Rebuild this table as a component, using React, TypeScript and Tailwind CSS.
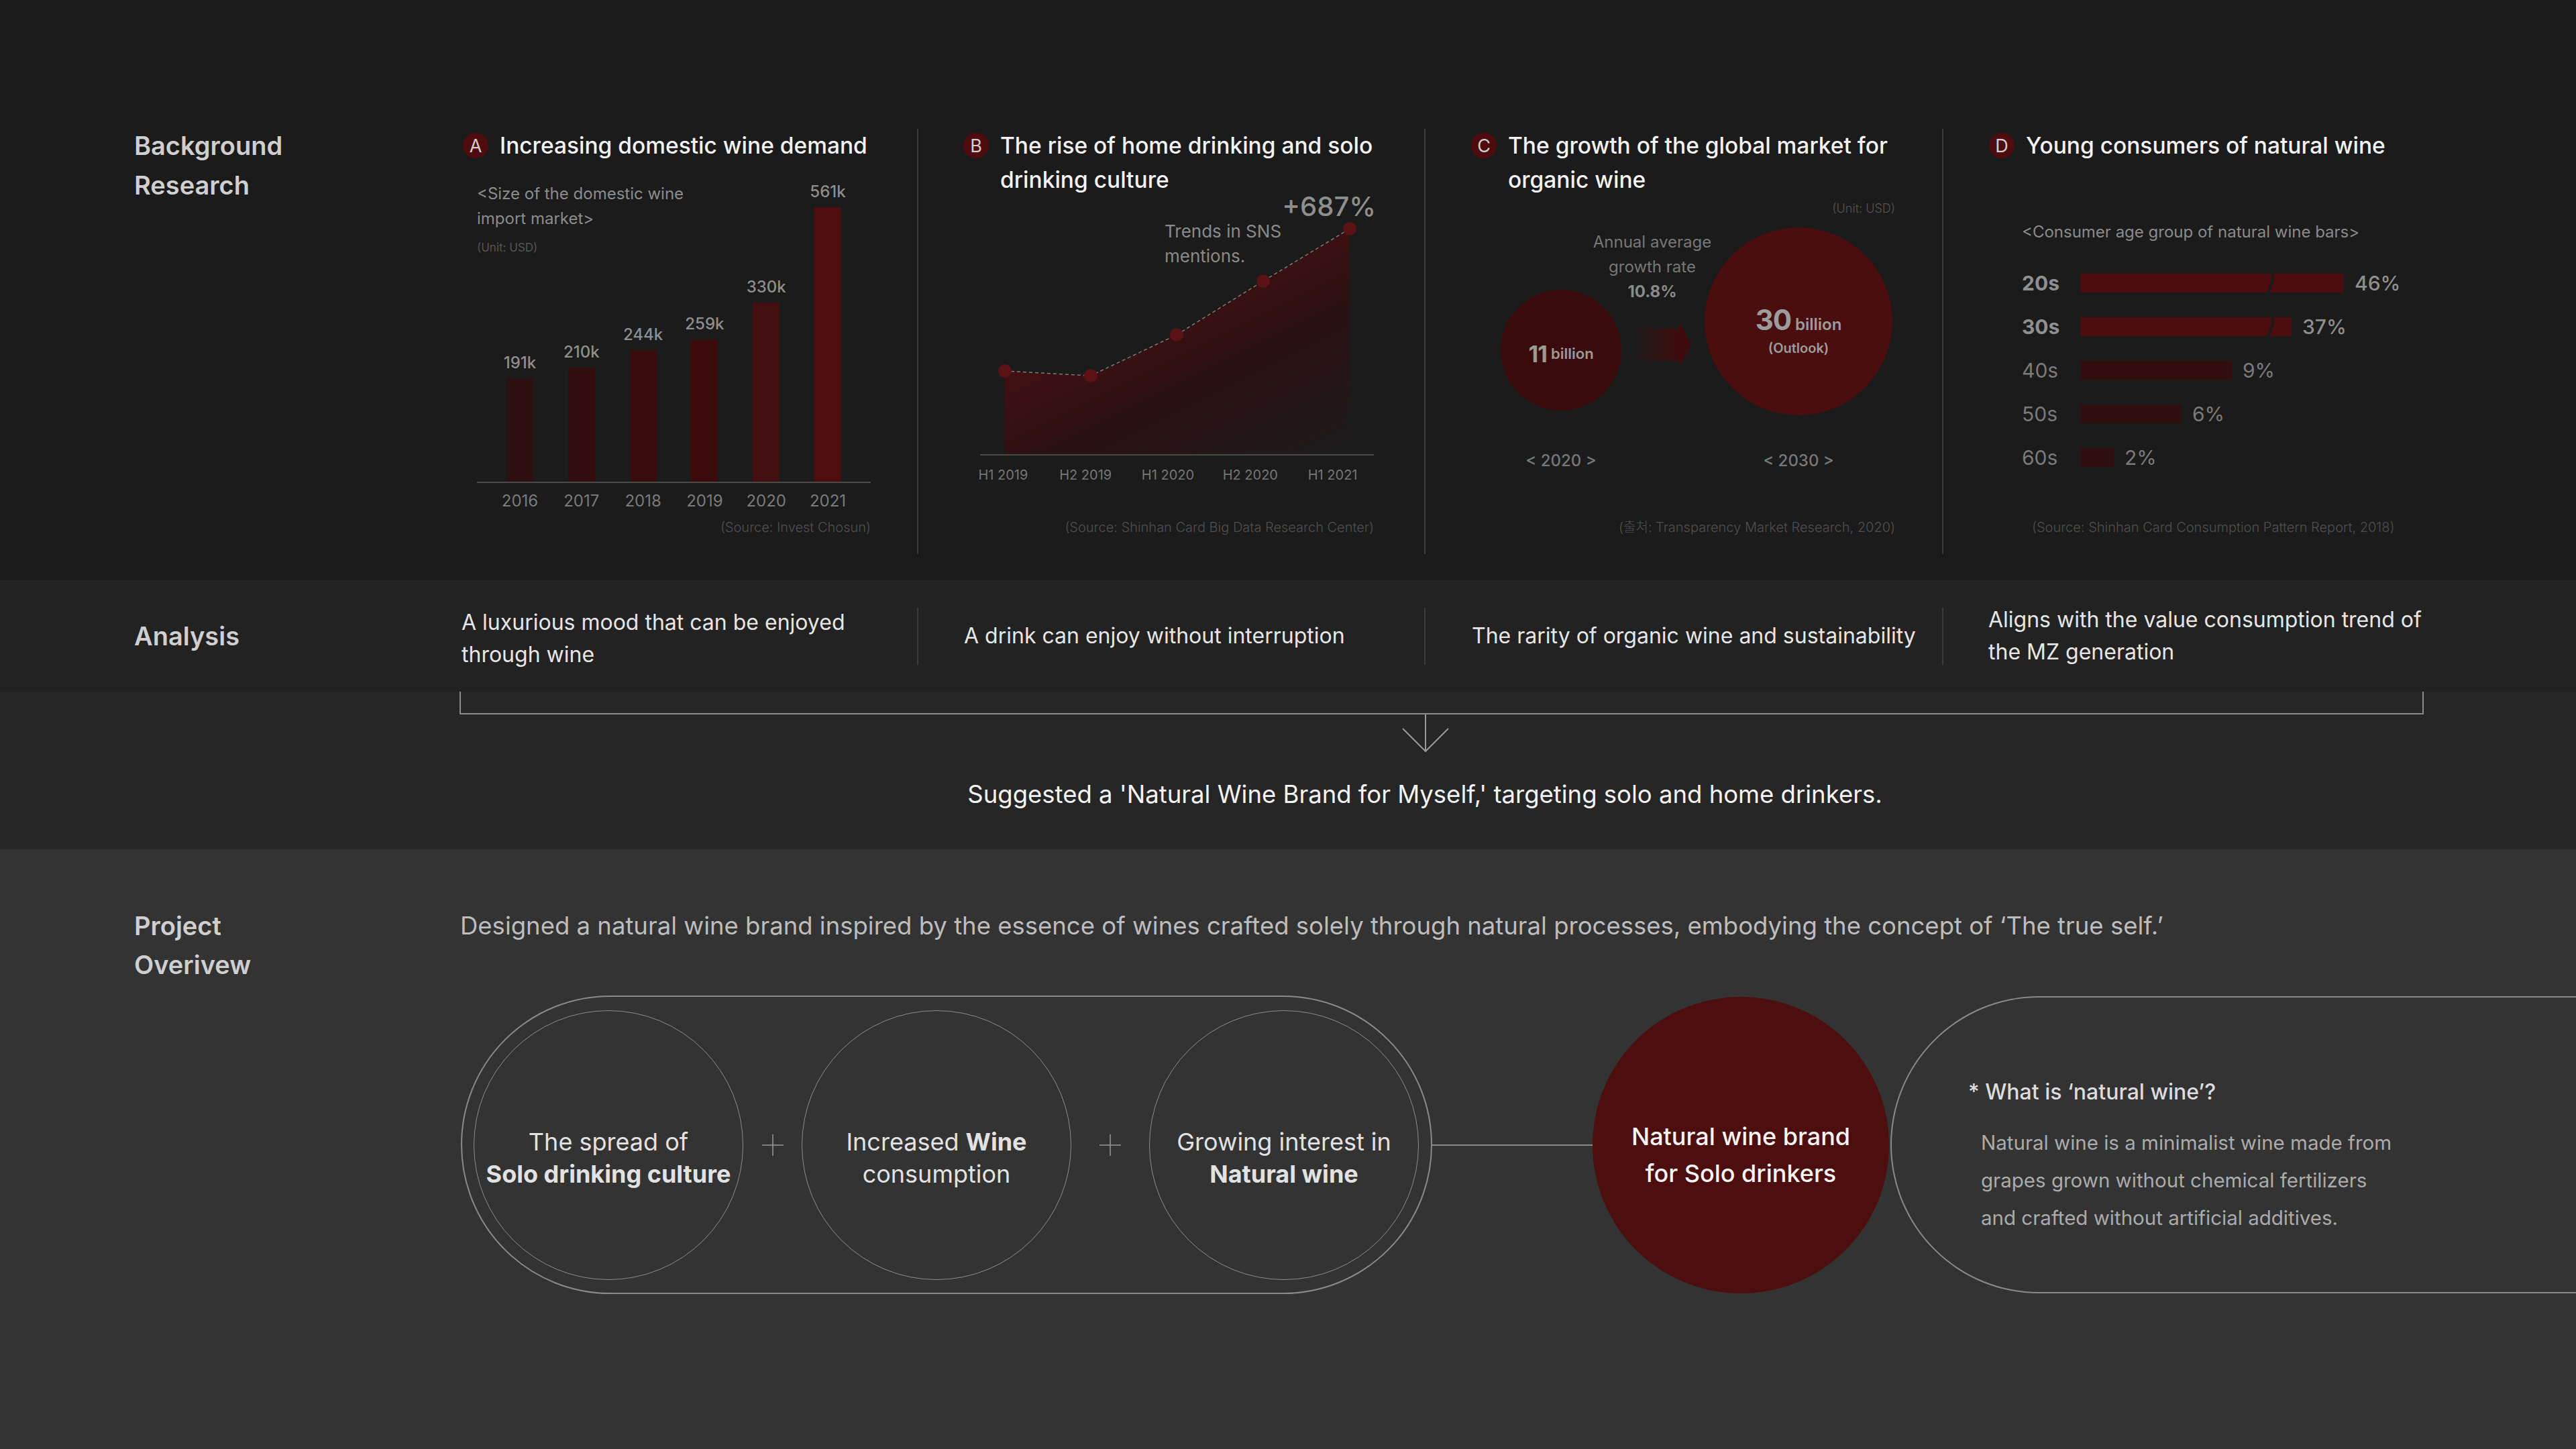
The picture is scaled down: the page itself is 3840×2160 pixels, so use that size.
import type { ReactNode } from "react";

type YearBar = { year: string; value: string; h: number; color: string };

const YEAR_BARS: YearBar[] = [
  { year: "2016", value: "191k", h: 154, color: "bg-[#2e0f11]" },
  { year: "2017", value: "210k", h: 170, color: "bg-[#330d0e]" },
  { year: "2018", value: "244k", h: 196, color: "bg-[#380c0c]" },
  { year: "2019", value: "259k", h: 212, color: "bg-[#3b0b0b]" },
  { year: "2020", value: "330k", h: 267, color: "bg-[#430f10]" },
  { year: "2021", value: "561k", h: 409, color: "bg-[#4f0d0d]" },
];

// page coordinates, the svg viewBox below uses the same space
const TREND_POINTS: [number, number][] = [
  [1498, 553],
  [1626, 560],
  [1754, 499],
  [1883, 419],
  [2012, 341],
];
const TREND_LABELS = ["H1 2019", "H2 2019", "H1 2020", "H2 2020", "H1 2021"];

const AGE_BARS = [
  { age: "20s", pct: "46%", w: 393, strong: true, color: "bg-[#4b0d0e]" },
  { age: "30s", pct: "37%", w: 315, strong: true, color: "bg-[#4b0d0e]" },
  { age: "40s", pct: "9%", w: 226, strong: false, color: "bg-[#330c0d]" },
  { age: "50s", pct: "6%", w: 151, strong: false, color: "bg-[#2f0e10]" },
  { age: "60s", pct: "2%", w: 50, strong: false, color: "bg-[#2f0e10]" },
];

const ANALYSIS = [
  "A luxurious mood that can be enjoyed through wine",
  "A drink can enjoy without interruption",
  "The rarity of organic wine and sustainability",
  "Aligns with the value consumption trend of the MZ generation",
];

function SectionLabel({ children }: { children: ReactNode }) {
  return (
    <div className="w-[690px] shrink-0 pl-[200px] text-[38px] font-semibold leading-[59px] text-[#cfcfcf]">
      {children}
    </div>
  );
}

function ColTitle({ badge, children }: { badge: string; children: ReactNode }) {
  return (
    <div className="flex items-start gap-[17px]">
      <span className="mt-[6px] flex size-[38px] shrink-0 items-center justify-center rounded-full bg-[#4e0c0e] text-[27px] leading-none text-[#cfcfcf]">
        {badge}
      </span>
      <h3 className="shrink-0 whitespace-nowrap text-[33.5px] font-medium leading-[51px] text-[#f2f2f2]">
        {children}
      </h3>
    </div>
  );
}

function Source({ children, className = "" }: { children: ReactNode; className?: string }) {
  return (
    <div className={`mt-auto pb-[28px] text-[20px] font-light leading-[24px] text-[#4f4f4f] ${className}`}>
      {children}
    </div>
  );
}

function DomesticDemand() {
  return (
    <div className="flex h-[634px] w-[677px] shrink-0 flex-col pr-[69px]">
      <ColTitle badge="A">Increasing domestic wine demand</ColTitle>
      <div className="relative ml-[21px] mt-[27px] h-[450px] border-b-2 border-[#4a4a4a]">
        <div className="absolute left-0 top-0 w-[360px] text-[24px] leading-[37px] text-[#8c8c8c]">
          &lt;Size of the domestic wine import market&gt;
        </div>
        <div className="absolute left-0 top-[87px] text-[17px] leading-[24px] text-[#555555]">(Unit: USD)</div>
        <div className="flex h-full items-end justify-between px-[44px]">
          {YEAR_BARS.map((b) => (
            <div key={b.year} className="flex w-[40px] flex-col items-center">
              <span className="mb-[9px] whitespace-nowrap text-[24px] font-medium leading-[28px] text-[#8e8e8e]">
                {b.value}
              </span>
              <div className={`w-[40px] ${b.color}`} style={{ height: b.h }} />
            </div>
          ))}
        </div>
      </div>
      <div className="ml-[21px] mt-[12px] flex justify-between px-[44px]">
        {YEAR_BARS.map((b) => (
          <div key={b.year} className="flex w-[40px] justify-center whitespace-nowrap text-[24px] leading-[30px] text-[#7a7a7a]">
            {b.year}
          </div>
        ))}
      </div>
      <Source className="text-right">(Source: Invest Chosun)</Source>
    </div>
  );
}

function HomeDrinking() {
  const line = TREND_POINTS.map((p) => p.join(",")).join(" ");
  const area = `${line} 2012,679 1498,679`;
  return (
    <div className="flex h-[634px] w-[756px] shrink-0 flex-col border-l-2 border-[#3c3c3c] pl-[67px] pr-[75px]">
      <ColTitle badge="B">
        The rise of home drinking and solo
        <br />
        drinking culture
      </ColTitle>
      <div className="relative h-[385px]">
        <svg className="absolute inset-0" width="612" height="385" viewBox="1436 294 612 385">
          <defs>
            <linearGradient id="trendFill" x1="1700" y1="330" x2="1900" y2="730" gradientUnits="userSpaceOnUse">
              <stop offset="0" stopColor="#551113" />
              <stop offset="0.55" stopColor="#2b1012" />
              <stop offset="1" stopColor="#1b1b1b" />
            </linearGradient>
          </defs>
          <polygon points={area} fill="url(#trendFill)" />
          <polyline points={line} fill="none" stroke="#7a7a7a" strokeWidth="1.5" strokeDasharray="5 4" />
          {TREND_POINTS.map(([x, y]) => (
            <circle key={x} cx={x} cy={y} r="10" fill="#5a1214" />
          ))}
          <line x1="1461" y1="678" x2="2048" y2="678" stroke="#4a4a4a" strokeWidth="2" />
        </svg>
        <div className="absolute right-[-3px] top-[4px] text-[40px] font-medium leading-[20px] text-[#8e8e8e]">+687%</div>
        <div className="absolute left-[300px] top-[32px] text-[26px] leading-[37px] text-[#8a8a8a]">
          Trends in SNS
          <br />
          mentions.
        </div>
      </div>
      <div className="ml-[-2px] mt-[16px] flex">
        {TREND_LABELS.map((l) => (
          <div key={l} className="w-[128px] text-center text-[20px] leading-[26px] text-[#767676]">
            {l}
          </div>
        ))}
      </div>
      <Source className="text-right">(Source: Shinhan Card Big Data Research Center)</Source>
    </div>
  );
}

function OrganicMarket() {
  return (
    <div className="flex h-[634px] w-[772px] shrink-0 flex-col border-l-2 border-[#3c3c3c] pl-[68px] pr-[70px]">
      <ColTitle badge="C">
        The growth of the global market for
        <br />
        organic wine
      </ColTitle>
      <div className="mt-[5px] text-right text-[18px] font-light leading-[24px] text-[#555555]">(Unit: USD)</div>
      <div className="relative mt-[16px] flex h-[280px] items-end">
        <div className="mb-[7px] ml-[44px] flex size-[180px] shrink-0 items-center justify-center rounded-full bg-[#3a0b0c] pt-[10px] text-[#9a9a9a]">
          <span className="text-[34px] font-bold tracking-tight">11</span>
          <span className="ml-[6px] text-[22px] font-semibold">billion</span>
        </div>
        <div className="mb-[72px] flex w-[124px] shrink-0 justify-center">
          <svg width="84" height="67" viewBox="0 0 84 67">
            <defs>
              <linearGradient id="growArrow" x1="0" y1="0" x2="1" y2="0">
                <stop offset="0" stopColor="#1e1a1a" />
                <stop offset="1" stopColor="#3e0b0c" />
              </linearGradient>
            </defs>
            <rect x="0" y="9.5" width="67" height="48" fill="url(#growArrow)" />
            <polygon points="67,0 84,33.5 67,67" fill="#3e0b0c" />
          </svg>
        </div>
        <div className="flex size-[280px] shrink-0 flex-col items-center justify-center rounded-full bg-[#4a0e0f] pt-[28px] text-[#9c9c9c]">
          <div className="flex items-baseline leading-[44px]">
            <span className="text-[42px] font-bold tracking-tight">30</span>
            <span className="ml-[6px] text-[24px] font-semibold">billion</span>
          </div>
          <div className="text-[20px] font-semibold leading-[26px]">(Outlook)</div>
        </div>
        <div className="absolute left-[170px] top-[3px] w-[200px] text-center text-[24px] leading-[37px] text-[#777777]">
          Annual average
          <br />
          growth rate
          <br />
          <span className="font-bold text-[#8a8a8a]">10.8%</span>
        </div>
      </div>
      <div className="mt-[52px] flex text-[24px] font-medium leading-[32px] text-[#777777]">
        <div className="ml-[44px] w-[180px] text-center">&lt; 2020 &gt;</div>
        <div className="w-[124px]" />
        <div className="w-[280px] text-center">&lt; 2030 &gt;</div>
      </div>
      <Source className="text-right">(출처: Transparency Market Research, 2020)</Source>
    </div>
  );
}

function YoungConsumers() {
  return (
    <div className="flex h-[634px] w-[755px] shrink-0 flex-col border-l-2 border-[#3c3c3c] pl-[68px]">
      <ColTitle badge="D">Young consumers of natural wine</ColTitle>
      <div className="ml-[49px] mt-[85px] text-[24px] leading-[36px] text-[#8a8a8a]">
        &lt;Consumer age group of natural wine bars&gt;
      </div>
      <div className="ml-[49px] mt-[25px] flex flex-col">
        {AGE_BARS.map((r) => (
          <div key={r.age} className="flex h-[65px] items-center">
            <span
              className={`w-[87px] text-[30px] leading-none ${
                r.strong ? "font-bold text-[#8f8f8f]" : "text-[#7a7a7a]"
              }`}
            >
              {r.age}
            </span>
            <div className={`relative h-[28px] ${r.color}`} style={{ width: r.w }}>
              {r.strong && (
                <svg className="absolute left-[278px] top-0" width="12" height="28" viewBox="0 0 12 28">
                  <path d="M3 29 C3 20 9 14 9 8 L9 -1" fill="none" stroke="#1b1b1b" strokeWidth="4" />
                </svg>
              )}
            </div>
            <span
              className={`ml-[16px] text-[30px] leading-none ${
                r.strong ? "font-medium text-[#8e8e8e]" : "text-[#7a7a7a]"
              }`}
            >
              {r.pct}
            </span>
          </div>
        ))}
      </div>
      <Source className="ml-[64px]">(Source: Shinhan Card Consumption Pattern Report, 2018)</Source>
    </div>
  );
}

function ResearchSection() {
  return (
    <section className="flex h-[865px] bg-[#1b1b1b] pt-[192px]">
      <SectionLabel>
        <div className="mt-[-4px]">
          Background
          <br />
          Research
        </div>
      </SectionLabel>
      <DomesticDemand />
      <HomeDrinking />
      <OrganicMarket />
      <YoungConsumers />
    </section>
  );
}

function AnalysisRow() {
  const cols = [
    "w-[677px] pr-[69px]",
    "w-[756px] border-l-2 border-[#3c3c3c] pl-[68px] pr-[40px]",
    "w-[772px] border-l-2 border-[#3c3c3c] pl-[69px] whitespace-nowrap",
    "w-[755px] border-l-2 border-[#3c3c3c] pl-[67px]",
  ];
  return (
    <section className="flex h-[166px] items-center bg-[#222222]">
      <SectionLabel>Analysis</SectionLabel>
      {ANALYSIS.map((text, i) => (
        <div key={text} className={`flex h-[85px] shrink-0 items-center ${cols[i]}`}>
          <p className={`text-[32px] leading-[48px] text-[#e6e6e6] ${i === 0 ? "ml-[-2px] mt-[8px]" : ""}`}>{text}</p>
        </div>
      ))}
    </section>
  );
}

function SuggestionBand() {
  return (
    <section className="h-[235px] bg-[#262626]">
      <div className="ml-[685px] h-[34px] w-[2928px] border-x-2 border-b-2 border-[#8a8a8a]" />
      <svg className="ml-[2089px] block" width="72" height="56" viewBox="0 0 72 56">
        <line x1="36" y1="0" x2="36" y2="55" stroke="#9a9a9a" strokeWidth="2" />
        <polyline points="2,21 36,55 70,21" fill="none" stroke="#9a9a9a" strokeWidth="2" />
      </svg>
      <p className="ml-[690px] mt-[39px] w-[2868px] text-center text-[36.5px] leading-[48px] text-[#f4f4f4]">
        Suggested a 'Natural Wine Brand for Myself,' targeting solo and home drinkers.
      </p>
    </section>
  );
}

function Plus() {
  return (
    <svg width="34" height="34" viewBox="0 0 34 34">
      <line x1="17" y1="1" x2="17" y2="33" stroke="#9a9a9a" strokeWidth="1.5" />
      <line x1="1" y1="17" x2="33" y2="17" stroke="#9a9a9a" strokeWidth="1.5" />
    </svg>
  );
}

function FactorCircle({ children }: { children: ReactNode }) {
  return (
    <div className="flex size-[402px] shrink-0 flex-col items-center justify-center rounded-full border-[1.5px] border-[#8c8c8c] pt-[38px] text-center text-[36px] leading-[48px] text-[#e2e2e2]">
      {children}
    </div>
  );
}

function OverviewSection() {
  return (
    <section className="flex h-[894px] bg-[#333333] pt-[85px]">
      <SectionLabel>
        <div className="leading-[58px]">
          Project
          <br />
          Overivew
        </div>
      </SectionLabel>
      <div className="min-w-0 flex-1">
        <p className="ml-[-4px] whitespace-nowrap text-[36.5px] leading-[58px] text-[#bdbdbd]">
          Designed a natural wine brand inspired by the essence of wines crafted solely through natural processes, embodying the concept of ‘The true self.’
        </p>
        <div className="ml-[-3px] mt-[75px] flex items-center">
          <div className="flex h-[445px] w-[1448px] shrink-0 items-center rounded-full border-2 border-[#8a8a8a] pl-[17px]">
            <FactorCircle>
              <span>The spread of</span>
              <span className="font-bold">Solo drinking culture</span>
            </FactorCircle>
            <div className="flex w-[87px] shrink-0 justify-center">
              <Plus />
            </div>
            <FactorCircle>
              <span>
                Increased <b className="font-bold">Wine</b>
              </span>
              <span>consumption</span>
            </FactorCircle>
            <div className="flex w-[116px] shrink-0 justify-center">
              <Plus />
            </div>
            <FactorCircle>
              <span>Growing interest in</span>
              <span className="font-bold">Natural wine</span>
            </FactorCircle>
          </div>
          <div className="h-[2px] w-[239px] shrink-0 bg-[#8a8a8a]" />
          <div className="flex size-[442px] shrink-0 flex-col items-center justify-center rounded-full bg-[#4d0e0e] pt-[30px] text-center text-[36px] font-medium leading-[55px] text-[#f4f4f4]">
            <span>Natural wine brand</span>
            <span>for Solo drinkers</span>
          </div>
          <div className="ml-[2px] h-[443px] w-[1200px] shrink-0 rounded-l-full border-2 border-r-0 border-[#8a8a8a] pl-[114px] pt-[119px]">
            <h4 className="text-[32px] font-medium leading-[44px] text-[#dcdcdc]">* What is ‘natural wine’?</h4>
            <p className="ml-[19px] mt-[25px] text-[29.5px] leading-[56px] text-[#ababab]">
              Natural wine is a minimalist wine made from
              <br />
              grapes grown without chemical fertilizers
              <br />
              and crafted without artificial additives.
            </p>
          </div>
        </div>
      </div>
    </section>
  );
}

export default function App() {
  return (
    <div className="h-[2160px] w-[3840px] overflow-hidden bg-[#1b1b1b] font-['Inter','Noto_Sans_CJK_KR',sans-serif] antialiased">
      <ResearchSection />
      <AnalysisRow />
      <SuggestionBand />
      <OverviewSection />
    </div>
  );
}
